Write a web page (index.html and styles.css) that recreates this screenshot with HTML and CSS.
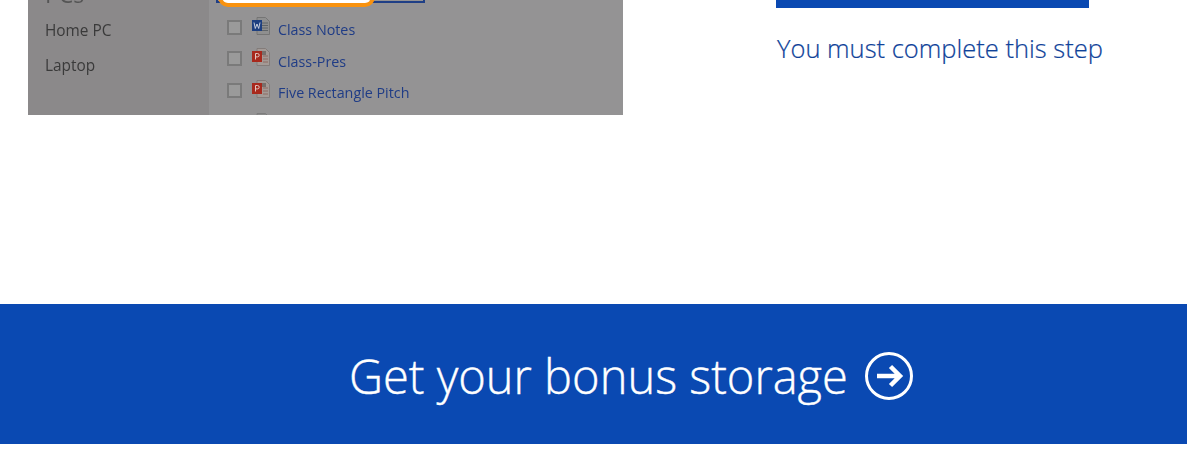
FILE: index.html
```html
<!DOCTYPE html>
<html lang="en">
<head>
<meta charset="utf-8">
<title>Get your bonus storage</title>
<link rel="stylesheet" href="styles.css">
</head>
<body>
<main class="step">
  <div class="shot">
    <aside class="shot-side">
      <div class="side-cut">PCs</div>
      <div class="side-item">Home PC</div>
      <div class="side-item">Laptop</div>
    </aside>
    <div class="shot-main">
      <div class="searchbar"><div class="highlight"></div></div>
      <ul class="files">
        <li class="file"><span class="check"></span>
          <svg class="doc" viewBox="0 0 18 19"><path d="M5 .5h8.500l4 4v13H5z" fill="#8f8f8f" stroke="#6f6f6f" stroke-width=".8"/><path d="M10 6h6M10 8.500h6M10 11h6M10 13.500h6" stroke="#5f6468" stroke-width="1"/><rect y="3" width="10" height="11" fill="#1d3f80"/><path d="M2 5.500l1.300 6 1.700-4.500 1.700 4.500 1.300-6" fill="none" stroke="#d8dce6" stroke-width=".9"/></svg>
          <span class="file-name">Class Notes</span></li>
        <li class="file"><span class="check"></span>
          <svg class="doc" viewBox="0 0 18 19"><path d="M5 .5h8.500l4 4v13H5z" fill="#a39a96" stroke="#7d7673" stroke-width=".8"/><path d="M11 8h5M11 11h5M11 14h5" stroke="#8d6b62" stroke-width="1"/><rect x="10" y="3" width="4" height="4" fill="#77706c"/><rect y="3" width="10" height="11" fill="#a8291d"/><path d="M3.500 11.500v-6h2a1.600 1.600 0 0 1 0 3.400h-2" fill="none" stroke="#e3c7c0" stroke-width="1"/></svg>
          <span class="file-name">Class-Pres</span></li>
        <li class="file"><span class="check"></span>
          <svg class="doc" viewBox="0 0 18 19"><path d="M5 .5h8.500l4 4v13H5z" fill="#a39a96" stroke="#7d7673" stroke-width=".8"/><path d="M11 8h5M11 11h5M11 14h5" stroke="#8d6b62" stroke-width="1"/><rect x="10" y="3" width="4" height="4" fill="#77706c"/><rect y="3" width="10" height="11" fill="#a8291d"/><path d="M3.500 11.500v-6h2a1.600 1.600 0 0 1 0 3.400h-2" fill="none" stroke="#e3c7c0" stroke-width="1"/></svg>
          <span class="file-name">Five Rectangle Pitch</span></li>
        <li class="file file-next"><span class="check"></span>
          <svg class="doc" viewBox="0 0 18 19"><path d="M5 .5h8.500l4 4v13H5z" fill="#8a8a8a" stroke="#787878" stroke-width=".8"/></svg></li>
      </ul>
    </div>
  </div>
  <div class="action">
    <div class="action-bar"></div>
    <p class="action-note">You must complete this step</p>
  </div>
</main>
<a class="banner" href="#">
  <span class="banner-text">Get your bonus storage</span>
  <svg class="banner-icon" viewBox="0 0 48 48"><circle cx="24" cy="24" r="22.500" fill="none" stroke="#fff" stroke-width="3"/><path d="M12 24h23M25.500 14.500L35 24l-9.500 9.500" fill="none" stroke="#fff" stroke-width="4.500"/></svg>
</a>
</body>
</html>
```

FILE: styles.css
```css
* { box-sizing: border-box; }
html, body { margin: 0; padding: 0; background: #fff; }
body { font-family: "Open Sans", "Noto Sans", sans-serif; overflow: hidden; height: 455px; }

.step { display: flex; height: 304px; padding-left: 28px; align-items: flex-start; }

.shot { display: flex; width: 595px; height: 115px; overflow: hidden; background: #949394; flex: none; }
.shot-side { width: 181px; flex: none; height: 115px; background: #8b898a; padding: 0 0 32px 17px; display: flex; flex-direction: column; justify-content: flex-end; color: #3a3a3a; font-size: 15.400px; filter: blur(.4px); }
.side-item { height: 34.500px; line-height: 33px; flex: none; }
.side-cut { color: #555; font-size: 23px; line-height: 24px; flex: none; margin-bottom: 8px; }

.shot-main { flex: 1; height: 115px; display: flex; flex-direction: column; filter: blur(.5px); }
.searchbar { height: 3px; width: 209px; margin-left: 7px; border: solid #1f3f86; border-width: 0 2px 2px 2px; position: relative; flex: none; }
.highlight { position: absolute; left: 0; top: -4px; width: 157px; height: 11px; background: #fff; border: 4px solid #f8920f; border-radius: 0 0 10px 10px; }
.files { list-style: none; margin: 11px 0 0 18px; padding: 0; }
.file { display: flex; align-items: center; height: 31.500px; }
.file-next { margin-top: 2px; }
.check { width: 15px; height: 15px; border: 2px solid #7a7a7a; background: #9a9a9a; flex: none; margin-top: -5px; }
.doc { width: 18px; height: 19px; margin-left: 10px; flex: none; margin-top: -7px; }
.file-name { margin-left: 8px; font-size: 14.300px; color: #1f3c86; white-space: nowrap; }

.action { margin-left: 153px; width: 340px; flex: none; }
.action-bar { width: 313px; height: 8px; background: #0a49b2; }
.action-note { margin: 24px 0 0 1px; font-size: 25.500px; line-height: 33px; color: #0f4299; white-space: nowrap; font-weight: 300; -webkit-text-stroke: .2px #0f4299; }

.banner { display: flex; align-items: center; height: 140px; background: #0a49b2; color: #fff; text-decoration: none; padding-left: 349px; gap: 17px; }
.banner-text { font-size: 47px; line-height: 60px; font-weight: 300; -webkit-text-stroke: .4px #fff; white-space: nowrap; position: relative; top: 2px; }
.banner-icon { width: 48px; height: 48px; flex: none; position: relative; top: 2px; }
```
